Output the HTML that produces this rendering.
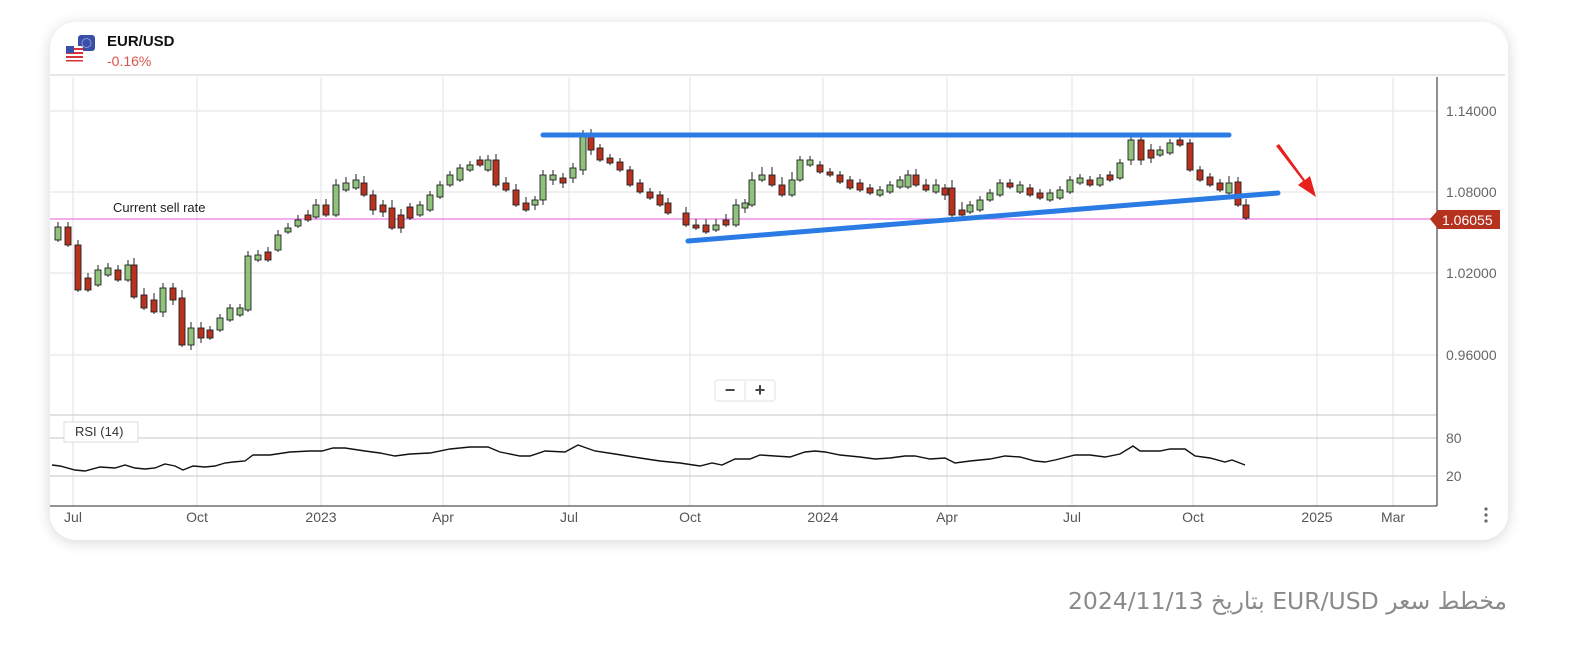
<!DOCTYPE html>
<html><head><meta charset="utf-8"><style>
html,body{margin:0;width:1587px;height:662px;background:#fff;overflow:hidden;font-family:"Liberation Sans",sans-serif}
.card{position:absolute;left:50px;top:22px;width:1458px;height:518px;border-radius:26px;background:#fff;box-shadow:0 2px 14px rgba(0,0,0,.16)}
.cap{position:absolute;right:80px;top:587px;font-family:"DejaVu Sans",sans-serif;font-size:23.5px;color:#8a8a8a;direction:rtl;white-space:nowrap}
svg{position:absolute;left:0;top:0}
</style></head><body>
<div class="card"></div>
<svg id="s" width="1587" height="662" xmlns="http://www.w3.org/2000/svg" font-family="Liberation Sans, sans-serif">
<line x1="50" y1="75" x2="1505" y2="75" stroke="#e6e6e6" stroke-width="2"/>
<g stroke="#e8e8e8" stroke-width="1.3">
<line x1="50" y1="111" x2="1437" y2="111"/><line x1="50" y1="192" x2="1437" y2="192"/><line x1="50" y1="273" x2="1437" y2="273"/><line x1="50" y1="355" x2="1437" y2="355"/>
<line x1="73" y1="77" x2="73" y2="506"/><line x1="197" y1="77" x2="197" y2="506"/><line x1="321" y1="77" x2="321" y2="506"/><line x1="443" y1="77" x2="443" y2="506"/><line x1="569" y1="77" x2="569" y2="506"/><line x1="690" y1="77" x2="690" y2="506"/><line x1="823" y1="77" x2="823" y2="506"/><line x1="947" y1="77" x2="947" y2="506"/><line x1="1072" y1="77" x2="1072" y2="506"/><line x1="1193" y1="77" x2="1193" y2="506"/><line x1="1317" y1="77" x2="1317" y2="506"/><line x1="1393" y1="77" x2="1393" y2="506"/>
</g>
<g stroke="#d0d0d0" stroke-width="1.3"><line x1="50" y1="415" x2="1437" y2="415"/><line x1="50" y1="438" x2="1437" y2="438"/><line x1="50" y1="476" x2="1437" y2="476"/></g>
<line x1="50" y1="506" x2="1437" y2="506" stroke="#555" stroke-width="1.3"/>
<line x1="1437" y1="77" x2="1437" y2="506" stroke="#555" stroke-width="1.3"/>
<g fill="#666" font-size="14"><text x="1446" y="116">1.14000</text><text x="1446" y="197">1.08000</text><text x="1446" y="278">1.02000</text><text x="1446" y="360">0.96000</text><text x="1446" y="443">80</text><text x="1446" y="481">20</text></g>
<g fill="#555" font-size="14" text-anchor="middle"><text x="73" y="522">Jul</text><text x="197" y="522">Oct</text><text x="321" y="522">2023</text><text x="443" y="522">Apr</text><text x="569" y="522">Jul</text><text x="690" y="522">Oct</text><text x="823" y="522">2024</text><text x="947" y="522">Apr</text><text x="1072" y="522">Jul</text><text x="1193" y="522">Oct</text><text x="1317" y="522">2025</text><text x="1393" y="522">Mar</text></g>
<g fill="#666"><circle cx="1486" cy="509" r="1.6"/><circle cx="1486" cy="515" r="1.6"/><circle cx="1486" cy="521" r="1.6"/></g>
<rect x="64" y="422" width="74" height="20" fill="#fff" stroke="#ddd"/><text x="75" y="436" font-size="13" fill="#333">RSI (14)</text>
<line x1="50" y1="219" x2="1437" y2="219" stroke="#ea7ce8" stroke-width="1.3"/>
<text x="113" y="212" font-size="13" fill="#222">Current sell rate</text>
<path d="M1430 219 L1438 210 H1500 V229 H1438 Z" fill="#b5321f"/><text x="1442" y="225" font-size="14" fill="#fff">1.06055</text>
<g id="c"></g>
<polyline fill="none" stroke="#111" stroke-width="1.4" points="52,465 60,466 75,470 85,471 100,467 115,468 125,465 135,468 145,469 155,468 165,464 175,466 183,470 193,466 205,467 215,466 225,463 233,462 245,461 253,455 270,455 290,452 310,451 322,451 333,448 345,448 365,451 380,453 395,456 410,454 430,453 450,449 470,447 488,447 500,452 520,456 530,456 545,451 565,452 578,445 595,451 615,454 640,458 660,461 680,463 700,466 712,463 722,465 735,459 750,459 760,455 775,456 790,457 805,452 815,451 825,452 840,455 860,457 875,459 890,458 905,456 915,456 930,459 945,458 955,463 970,461 990,459 1005,456 1020,457 1035,461 1045,462 1055,460 1075,455 1090,455 1105,457 1120,454 1133,446 1140,451 1160,451 1170,449 1185,449 1195,456 1210,458 1225,462 1232,460 1245,465"/>
<g stroke="#2b7be4" stroke-width="5" stroke-linecap="round"><line x1="543" y1="135" x2="1229" y2="135"/><line x1="688" y1="241" x2="1278" y2="193"/></g>
<path d="M1276 146 L1303 181 L1298 185 L1316 197 L1310 176 L1305 180 L1279 144 Z" fill="#e8201c"/>
<rect x="715" y="380" width="60" height="21" rx="3" fill="#fff" stroke="#e2e2e2"/><line x1="745" y1="381" x2="745" y2="400" stroke="#e2e2e2"/>
<text x="730" y="396" font-size="18" font-weight="bold" fill="#444" text-anchor="middle">−</text><text x="760" y="396" font-size="18" font-weight="bold" fill="#444" text-anchor="middle">+</text>
<rect x="78" y="35" width="17" height="16" rx="3" fill="#3a4fa8"/><circle cx="86.5" cy="43" r="4.5" fill="none" stroke="#8896d8" stroke-width="1"/>
<rect x="66" y="46" width="17" height="15" rx="2" fill="#fff"/><g fill="#d8323a"><rect x="66" y="48" width="17" height="2"/><rect x="66" y="52" width="17" height="2"/><rect x="66" y="56" width="17" height="2"/><rect x="66" y="60" width="17" height="1.5"/></g><rect x="66" y="46" width="8" height="7" fill="#3a4fa8"/>
<text x="107" y="46" font-size="15" font-weight="bold" fill="#111">EUR/USD</text>
<text x="107" y="66" font-size="14" fill="#d9534f">-0.16%</text>
</svg>
<div class="cap">مخطط سعر EUR/USD بتاريخ 2024/11/13</div>
<script>
var d=[[58,227,240,'g'],[68,227,245,'r'],[78,245,290,'r'],[88,278,290,'r'],[98,270,285,'g'],[108,268,275,'g'],[118,270,280,'r'],[128,265,280,'g'],[134,265,297,'r'],[144,295,308,'r'],[154,300,312,'r'],[163,288,312,'g'],[173,288,300,'r'],[182,298,345,'r'],[191,328,345,'g'],[201,328,338,'r'],[210,330,338,'r'],[220,318,330,'g'],[230,308,320,'g'],[240,308,315,'g'],[248,256,310,'g'],[258,255,260,'g'],[268,252,260,'r'],[278,235,250,'g'],[288,228,232,'g'],[298,220,226,'g'],[308,215,220,'r'],[316,205,217,'g'],[326,205,215,'r'],[336,185,215,'g'],[346,183,190,'g'],[356,180,188,'g'],[364,183,195,'r'],[373,195,210,'r'],[383,205,212,'r'],[392,208,228,'r'],[401,215,228,'r'],[410,207,218,'r'],[420,205,215,'g'],[430,195,210,'g'],[440,185,197,'g'],[450,175,185,'g'],[460,168,180,'g'],[470,165,170,'g'],[480,160,165,'r'],[488,160,170,'g'],[496,160,185,'r'],[506,183,190,'r'],[516,190,205,'r'],[526,203,210,'r'],[535,200,205,'g'],[543,175,200,'g'],[553,175,180,'g'],[563,178,183,'r'],[573,168,178,'g'],[583,135,170,'g'],[591,135,150,'r'],[600,148,160,'r'],[610,158,163,'r'],[620,162,170,'r'],[630,170,185,'r'],[640,183,192,'r'],[650,192,198,'r'],[660,195,205,'r'],[668,203,213,'r'],[686,213,225,'r'],[696,225,228,'r'],[706,225,232,'r'],[716,225,230,'g'],[726,220,225,'r'],[736,205,225,'g'],[745,203,208,'g'],[752,180,205,'g'],[762,175,180,'g'],[772,175,185,'r'],[782,185,195,'r'],[792,180,195,'g'],[800,160,180,'g'],[810,160,165,'g'],[820,165,172,'r'],[830,172,175,'r'],[840,175,182,'r'],[850,180,188,'r'],[860,183,190,'r'],[870,188,193,'r'],[880,190,195,'g'],[890,185,192,'g'],[900,180,187,'g'],[908,175,187,'g'],[916,175,185,'r'],[926,185,190,'r'],[936,185,192,'g'],[945,188,195,'r'],[952,188,215,'r'],[962,210,215,'r'],[970,205,212,'g'],[980,200,210,'g'],[990,193,200,'g'],[1000,183,195,'g'],[1010,183,187,'r'],[1020,185,192,'g'],[1030,188,195,'r'],[1040,193,198,'r'],[1050,193,200,'g'],[1060,190,198,'g'],[1070,180,192,'g'],[1080,178,183,'g'],[1090,180,185,'r'],[1100,178,185,'g'],[1110,175,180,'r'],[1120,163,178,'g'],[1131,140,160,'g'],[1141,140,160,'r'],[1151,150,158,'r'],[1160,150,155,'g'],[1170,143,153,'g'],[1180,140,145,'r'],[1190,143,170,'r'],[1200,170,180,'r'],[1210,177,185,'r'],[1220,183,190,'r'],[1229,183,193,'g'],[1238,182,205,'r'],[1246,205,218,'r']];
var h='';d.forEach(function(c){var w=4+((c[0]*7)%5);h+='<line x1="'+c[0]+'" y1="'+(c[1]-w)+'" x2="'+c[0]+'" y2="'+(c[2]+((c[0]*3)%6)+2)+'" stroke="#222" stroke-width="1"/>';h+='<rect x="'+(c[0]-3)+'" y="'+c[1]+'" width="6" height="'+Math.max(2,c[2]-c[1])+'" fill="'+(c[3]=='g'?'#8fc27a':'#b8321e')+'" stroke="#222" stroke-width="0.9"/>';});
document.getElementById('c').innerHTML=h;
</script>
</body></html>
